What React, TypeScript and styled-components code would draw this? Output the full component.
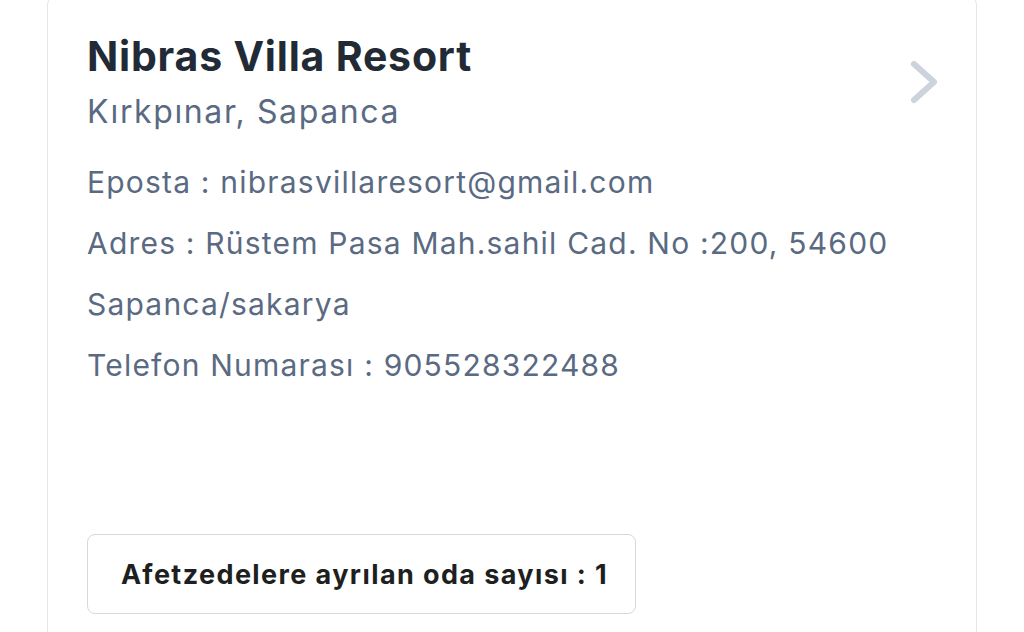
import styled, { createGlobalStyle } from "styled-components";

const GlobalStyle = createGlobalStyle`
	body {
		margin: 0;
		background: #ffffff;
		font-family: Inter, "Open Sans", sans-serif;
		overflow: hidden;
	}
`;

const hotel = {
	name: "Nibras Villa Resort",
	location: "Kırkpınar, Sapanca",
	email: "nibrasvillaresort@gmail.com",
	address: ["Rüstem Pasa Mah.sahil Cad. No :200, 54600", "Sapanca/sakarya"],
	phone: "905528322488",
	rooms: 1,
};

const Chevron = () => (
	<svg width="34" height="50" viewBox="0 0 34 50" fill="none">
		<path
			d="M7 7 L27 25 L7 43"
			stroke="#cdd3dc"
			strokeWidth="6"
			strokeLinecap="round"
			strokeLinejoin="round"
		/>
	</svg>
);

const App = () => {
	return (
		<>
			<GlobalStyle />
			<Page>
				<Card>
					<Header>
						<div>
							<Title>{hotel.name}</Title>
							<Location>{hotel.location}</Location>
						</div>
						<Chevron />
					</Header>

					<Info>
						<Line>Eposta : {hotel.email}</Line>
						<Line>Adres : {hotel.address[0]}</Line>
						<Line>{hotel.address[1]}</Line>
						<Line>Telefon Numarası : {hotel.phone}</Line>
					</Info>

					<RoomBox>Afetzedelere ayrılan oda sayısı : {hotel.rooms}</RoomBox>
				</Card>
			</Page>
		</>
	);
};

const Page = styled.div`
	width: 1024px;
	height: 632px;
	overflow: hidden;
`;

const Card = styled.div`
	margin: -12px 0 0 47px;
	width: 930px;
	height: 720px;
	box-sizing: border-box;
	border: 1.5px solid #e3e6ea;
	border-radius: 18px;
	padding: 43px 35px 0 39px;
`;

const Header = styled.div`
	display: flex;
	justify-content: space-between;
	align-items: center;
`;

const Title = styled.h2`
	margin: 0;
	font-size: 41px;
	line-height: 48px;
	font-weight: 700;
	letter-spacing: 0.8px;
	color: #222a35;
`;

const Location = styled.div`
	margin-top: 12px;
	font-size: 32px;
	line-height: 40px;
	letter-spacing: 1.6px;
	color: #5a6a82;
`;

const Info = styled.div`
	margin-top: 20px;
	display: flex;
	flex-direction: column;
`;

const Line = styled.div`
	font-size: 30px;
	line-height: 61px;
	letter-spacing: 1.2px;
	color: #5a6a82;
`;

const RoomBox = styled.div`
	margin-top: 138px;
	display: flex;
	align-items: center;
	width: 549px;
	height: 80px;
	box-sizing: border-box;
	padding-left: 33px;
	border: 1.5px solid #d6d8db;
	border-radius: 8px;
	font-size: 27px;
	font-weight: 700;
	letter-spacing: 1.4px;
	color: #1e1f21;
`;

export default App;
